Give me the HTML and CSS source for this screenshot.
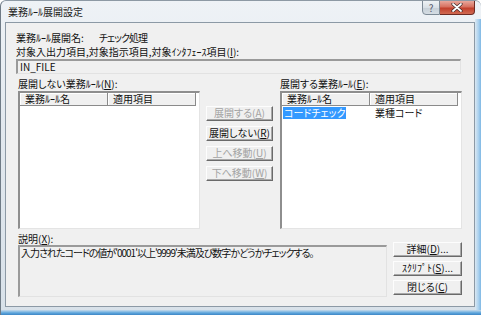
FILE: index.html
```html
<!DOCTYPE html>
<html lang="ja">
<head>
<meta charset="utf-8">
<link rel="stylesheet" href="styles.css">
</head>
<body>
<div class="window">
  <div class="titlebar">
    <span class="title">業務ﾙｰﾙ展開設定</span>
    <div class="caption">
      <div class="cap-help">?</div>
      <div class="cap-close">
        <svg width="12" height="9" viewBox="0 0 12 9"><path d="M2 1 L10 8 M10 1 L2 8" stroke="#3a2a2a" stroke-width="3.2" stroke-linecap="round"/><path d="M2 1 L10 8 M10 1 L2 8" stroke="#fff" stroke-width="1.8" stroke-linecap="round"/></svg>
      </div>
    </div>
  </div>
  <div class="client">
    <div class="line l14"><span>業務ﾙｰﾙ展開名:</span><span class="val">チェック処理</span></div>
    <div class="line l14">対象入出力項目,対象指示項目,対象ｲﾝﾀﾌｪｰｽ項目(<u>I</u>):</div>
    <div class="field">IN_FILE</div>
    <div class="lists">
      <div class="listcol">
        <div class="line">展開しない業務ﾙｰﾙ(<u>N</u>):</div>
        <div class="listbox">
          <div class="hdr"><div class="hc c1">業務ﾙｰﾙ名</div><div class="hc c2">適用項目</div></div>
        </div>
      </div>
      <div class="midbtns">
        <div class="btn dis">展開する(<u>A</u>)</div>
        <div class="btn">展開しない(<u>R</u>)</div>
        <div class="btn dis">上へ移動(<u>U</u>)</div>
        <div class="btn dis">下へ移動(<u>W</u>)</div>
      </div>
      <div class="listcol">
        <div class="line">展開する業務ﾙｰﾙ(<u>E</u>):</div>
        <div class="listbox">
          <div class="hdr"><div class="hc c1">業務ﾙｰﾙ名</div><div class="hc c2">適用項目</div></div>
          <div class="item"><div class="ic c1"><span class="sel">コードチェック</span></div><div class="ic c2">業種コード</div></div>
        </div>
      </div>
    </div>
    <div class="bottom">
      <div class="desccol">
        <div class="line">説明(<u>X</u>):</div>
        <div class="desc">入力されたコードの値が'0001'以上'9999'未満及び数字かどうかチェックする。</div>
      </div>
      <div class="rbtns">
        <div class="btn">詳細(<u>D</u>)...</div>
        <div class="btn">ｽｸﾘﾌﾟﾄ(<u>S</u>)...</div>
        <div class="btn">閉じる(<u>C</u>)</div>
      </div>
    </div>
  </div>
</div>
</body>
</html>
```
FILE: styles.css
```css
* { box-sizing: border-box; }
html, body { margin: 0; padding: 0; background: #fff; }
body {
  font-family: "Noto Sans CJK JP", "Noto Sans", sans-serif;
  font-size: 10px;
  font-feature-settings: "palt";
  color: #111;
}
.window {
  width: 481px;
  height: 315px;
  display: flex;
  flex-direction: column;
  background: linear-gradient(180deg, #eef2f6 0%, #e2e8ee 40%, #d8e1e9 100%);
  border-left: 1px solid #6f7b86;
  border-top: 1px solid #8d99a4;
  border-radius: 6px 6px 0 0;
  position: relative;
  overflow: hidden;
}
.window::before {
  content: "";
  position: absolute;
  top: 18px; right: 0; bottom: 0;
  width: 6px;
  background: linear-gradient(90deg, #dbe8f2 0%, #a9d0ee 60%, #7fb8e4 100%);
}
.window::after {
  content: "";
  position: absolute;
  left: 0; right: 0; bottom: 0;
  height: 5px;
  background: linear-gradient(180deg, #c6dbeb 0%, #5aa4dc 60%, #3e86c4 100%);
}
.titlebar {
  height: 21px;
  display: flex;
  align-items: flex-start;
  justify-content: space-between;
  padding-left: 7px;
}
.title {
  margin-top: 4px;
  line-height: 13px;
  color: #1b1b1b;
}
.caption {
  display: flex;
  margin-right: 6px;
  margin-top: -1px;
  position: relative;
  z-index: 1;
}
.cap-help {
  width: 18px;
  height: 15px;
  border: 1px solid #7d8a96;
  border-radius: 0 0 0 4px;
  background: linear-gradient(180deg, #eef2f5 0%, #d9e0e6 50%, #c6cfd7 51%, #d5dde4 100%);
  color: #556;
  font-size: 10px;
  line-height: 13px;
  text-align: center;
}
.cap-close {
  width: 35px;
  height: 15px;
  border: 1px solid #6d2a22;
  border-left: none;
  border-radius: 0 0 4px 0;
  background: linear-gradient(180deg, #e8a89c 0%, #d7705f 45%, #c2402c 55%, #d06a52 100%);
  display: flex;
  align-items: center;
  justify-content: center;
}
.client {
  margin: 0 6px 8px 4px;
  flex: 1;
  background: #f0f0f0;
  border: 1px solid #8c99a5;
  padding: 8px 0 0 10px;
  display: flex;
  flex-direction: column;
  position: relative;
  z-index: 1;
}
.line { line-height: 13px; white-space: nowrap; }
.line.l14 { line-height: 14px; }
.val { margin-left: 15px; letter-spacing: -1px; }
u { text-decoration-thickness: 1px; text-underline-offset: 1px; }
.field {
  width: 445px;
  height: 15px;
  border-top: 2px solid #9a9a9a;
  border-left: 2px solid #9a9a9a;
  border-right: 1px solid #e2e2e2;
  border-bottom: 1px solid #e2e2e2;
  background: #f0f0f0;
  padding-left: 2px;
  line-height: 12px;
}
.lists {
  display: flex;
  margin-top: 3px;
  margin-left: 2px;
}
.listcol { width: 182px; display: flex; flex-direction: column; }
.listcol .line { margin-bottom: 1px; }
.listbox {
  height: 138px;
  background: #fff;
  border-top: 2px solid #8e8e8e;
  border-left: 2px solid #8e8e8e;
  border-right: 1px solid #e4e4e4;
  border-bottom: 1px solid #e4e4e4;
}
.hdr { display: flex; height: 13px; }
.hc {
  height: 13px;
  background: #f0f0f0;
  border-right: 1px solid #8a8a8a;
  border-bottom: 1px solid #8a8a8a;
  box-shadow: inset 1px 1px 0 #fff;
  padding-left: 5px;
  line-height: 12px;
}
.c1 { width: 88px; }
.c2 { width: 88px; }
.item { display: flex; height: 12px; line-height: 12px; margin-top: 1px; }
.ic { padding-left: 1px; white-space: nowrap; }
.ic.c2 { padding-left: 5px; }
.sel { background: #3399ff; color: #fff; padding: 0 1px; display: inline-block; white-space: nowrap; }
.midbtns {
  width: 80px;
  padding: 29px 0 0 6px;
  display: flex;
  flex-direction: column;
  gap: 5px;
}
.btn {
  width: 67px;
  height: 15px;
  background: #f0f0f0;
  border: 1px solid;
  border-color: #fdfdfd #6a6a6a #6a6a6a #fdfdfd;
  box-shadow: inset -1px -1px 0 #a8a8a8;
  text-align: center;
  line-height: 12px;
  white-space: nowrap;
}
.btn.dis { color: #a3a3a3; }
.bottom {
  display: flex;
  margin-top: 3px;
  margin-left: 2px;
}
.desccol { width: 375px; display: flex; flex-direction: column; }
.desc {
  width: 369px;
  height: 52px;
  border-top: 2px solid #9a9a9a;
  border-left: 2px solid #9a9a9a;
  border-right: 1px solid #e2e2e2;
  border-bottom: 1px solid #e2e2e2;
  padding-left: 1px;
  line-height: 12px;
  white-space: nowrap;
  letter-spacing: -1px;
}
.rbtns {
  display: flex;
  flex-direction: column;
  gap: 4px;
  padding-top: 10px;
}
.rbtns .btn { width: 69px; }
```
